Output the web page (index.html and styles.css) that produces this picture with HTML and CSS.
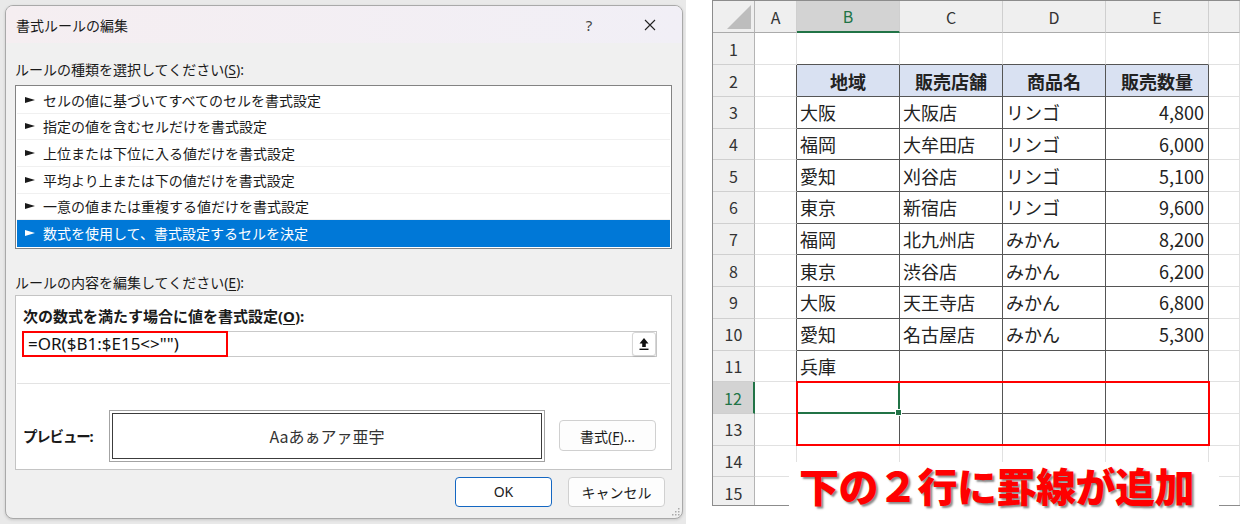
FILE: index.html
```html
<!DOCTYPE html>
<html lang="ja">
<head>
  <meta charset="UTF-8">
  <title>書式ルールの編集</title>
  <link rel="stylesheet" href="styles.css">
</head>
<body>
  <div class="desk">
    <div class="dialog">
      <div class="titlebar">
        <span class="title">書式ルールの編集</span>
        <span class="help">?</span>
        <span class="close">
          <svg width="12" height="12" viewBox="0 0 12 12"><path d="M1 1L11 11M11 1L1 11" stroke="#222" stroke-width="1.1" fill="none"/></svg>
        </span>
      </div>

      <div class="dlg-body">
        <div class="label">ルールの種類を選択してください(<u>S</u>):</div>
        <ul class="rule-list">
          <li><i class="tri"></i>セルの値に基づいてすべてのセルを書式設定</li>
          <li><i class="tri"></i>指定の値を含むセルだけを書式設定</li>
          <li><i class="tri"></i>上位または下位に入る値だけを書式設定</li>
          <li><i class="tri"></i>平均より上または下の値だけを書式設定</li>
          <li><i class="tri"></i>一意の値または重複する値だけを書式設定</li>
          <li class="selected"><i class="tri"></i>数式を使用して、書式設定するセルを決定</li>
        </ul>

        <div class="label second">ルールの内容を編集してください(<u>E</u>):</div>
        <div class="edit-box">
          <div class="bold-label">次の数式を満たす場合に値を書式設定(<u>O</u>):</div>
          <div class="formula">
            <span class="formula-text">=OR($B1:$E15&lt;&gt;"")</span>
            <span class="mark"></span>
            <span class="collapse">
              <svg width="12" height="14" viewBox="0 0 12 14"><path d="M6 1L1.5 6.5H4.2V10H7.8V6.5H10.5Z" fill="#111"/><rect x="1.5" y="11.6" width="9" height="1.4" fill="#111"/></svg>
            </span>
          </div>
          <div class="sep"></div>
          <div class="preview-row">
            <span class="bold-label preview-label">プレビュー:</span>
            <div class="preview">Aaあぁアァ亜宇</div>
            <button class="btn fmt">書式(<u>F</u>)...</button>
          </div>
        </div>

        <div class="actions">
          <button class="btn ok">OK</button>
          <button class="btn">キャンセル</button>
        </div>
      </div>
      <svg class="grip" width="9" height="9" viewBox="0 0 9 9">
        <rect x="7" y="1" width="1.5" height="1.5" fill="#aaa"/>
        <rect x="4" y="4" width="1.5" height="1.5" fill="#aaa"/>
        <rect x="7" y="4" width="1.5" height="1.5" fill="#aaa"/>
        <rect x="1" y="7" width="1.5" height="1.5" fill="#aaa"/>
        <rect x="4" y="7" width="1.5" height="1.5" fill="#aaa"/>
        <rect x="7" y="7" width="1.5" height="1.5" fill="#aaa"/>
      </svg>
    </div>
  </div>

  <div class="sheet-pane">
    <div class="sheet">
      <div class="row head">
        <div class="rh corner"><i></i></div>
        <div class="ch">A</div><div class="ch on">B</div><div class="ch">C</div><div class="ch">D</div><div class="ch">E</div><div class="ch"></div>
      </div>
      <div class="row r32">
        <div class="rh">1</div><div></div><div class="tt"></div><div class="tt"></div><div class="tt"></div><div class="tt"></div><div></div>
      </div>
      <div class="row r32">
        <div class="rh">2</div><div class="tl"></div>
        <div class="t th">地域</div><div class="t th">販売店舗</div><div class="t th">商品名</div><div class="t th">販売数量</div><div></div>
      </div>
      <div class="row">
        <div class="rh">3</div><div class="tl"></div>
        <div class="t">大阪</div><div class="t">大阪店</div><div class="t">リンゴ</div><div class="t num">4,800</div><div></div>
      </div>
      <div class="row">
        <div class="rh">4</div><div class="tl"></div>
        <div class="t">福岡</div><div class="t">大牟田店</div><div class="t">リンゴ</div><div class="t num">6,000</div><div></div>
      </div>
      <div class="row">
        <div class="rh">5</div><div class="tl"></div>
        <div class="t">愛知</div><div class="t">刈谷店</div><div class="t">リンゴ</div><div class="t num">5,100</div><div></div>
      </div>
      <div class="row">
        <div class="rh">6</div><div class="tl"></div>
        <div class="t">東京</div><div class="t">新宿店</div><div class="t">リンゴ</div><div class="t num">9,600</div><div></div>
      </div>
      <div class="row">
        <div class="rh">7</div><div class="tl"></div>
        <div class="t">福岡</div><div class="t">北九州店</div><div class="t">みかん</div><div class="t num">8,200</div><div></div>
      </div>
      <div class="row">
        <div class="rh">8</div><div class="tl"></div>
        <div class="t">東京</div><div class="t">渋谷店</div><div class="t">みかん</div><div class="t num">6,200</div><div></div>
      </div>
      <div class="row">
        <div class="rh">9</div><div class="tl"></div>
        <div class="t">大阪</div><div class="t">天王寺店</div><div class="t">みかん</div><div class="t num">6,800</div><div></div>
      </div>
      <div class="row">
        <div class="rh">10</div><div class="tl"></div>
        <div class="t">愛知</div><div class="t">名古屋店</div><div class="t">みかん</div><div class="t num">5,300</div><div></div>
      </div>
      <div class="row">
        <div class="rh">11</div><div class="tl"></div>
        <div class="t">兵庫</div><div class="t"></div><div class="t"></div><div class="t"></div><div></div>
      </div>
      <div class="row">
        <div class="rh on">12</div><div class="tl"></div>
        <div class="t sel"></div><div class="t"></div><div class="t"></div><div class="t"></div><div></div>
      </div>
      <div class="row">
        <div class="rh">13</div><div class="tl"></div>
        <div class="t"></div><div class="t"></div><div class="t"></div><div class="t"></div><div></div>
      </div>
      <div class="row">
        <div class="rh">14</div><div></div><div></div><div></div><div></div><div></div><div></div>
      </div>
      <div class="row">
        <div class="rh">15</div><div></div><div></div><div></div><div></div><div></div><div></div>
      </div>
    </div>
    <div class="mark-rows"></div>
    <div class="caption">下の２行に罫線が追加</div>
  </div>
</body>
</html>
```

FILE: styles.css
```css
body {
  margin: 0;
  height: 524px;
  display: flex;
  background: #fff;
  font-family: "Noto Sans", "Noto Sans CJK JP", sans-serif;
  color: #1a1a1a;
  overflow: hidden;
}

u {
  text-underline-offset: 2px;
}

/* ---- dialog side ---- */

.desk {
  flex: none;
  width: 686px;
  padding: 5px 3px 5px 5px;
  box-sizing: border-box;
  background: #e9e9e9;
}

.dialog {
  position: relative;
  width: 678px;
  height: 514px;
  box-sizing: border-box;
  border: 1px solid #a9a9a9;
  border-radius: 8px;
  background: #f0f0f0;
  box-shadow: 0 1px 3px rgba(0,0,0,0.15);
  overflow: hidden;
}

.titlebar {
  height: 37px;
  display: flex;
  align-items: center;
  padding-left: 10px;
  background: linear-gradient(90deg, #f5eef1, #f1eff6);
  font-size: 14px;
}

.help {
  margin-left: auto;
  width: 20px;
  text-align: center;
  font-size: 15px;
  color: #444;
}

.close {
  width: 46px;
  margin-left: 28px;
  margin-right: 9px;
  display: flex;
  justify-content: center;
}

.dlg-body {
  padding: 0 10px 0 9px;
}

.label {
  margin-top: 17px;
  height: 20px;
  line-height: 20px;
  font-size: 14px;
}

.label.second {
  margin-top: 24px;
}

.rule-list {
  list-style: none;
  margin: 5px 0 0;
  padding: 1px;
  border: 1px solid #838383;
  background: #fff;
  font-size: 14px;
}

.rule-list li {
  height: 26.67px;
  box-sizing: border-box;
  display: flex;
  align-items: center;
  padding-left: 8px;
  border-bottom: 1px solid #f0f0f0;
}

.rule-list li.selected {
  background: #0078d7;
  color: #fff;
  border-bottom-color: #0078d7;
}

.tri {
  width: 0;
  height: 0;
  border-left: 10px solid #1a1a1a;
  border-top: 3.5px solid transparent;
  border-bottom: 3.5px solid transparent;
  margin-right: 8px;
}

.selected .tri {
  border-left-color: #fff;
}

.edit-box {
  margin-top: 2px;
  height: 175px;
  box-sizing: border-box;
  border: 1px solid #c4c4c4;
  background: #fff;
  padding-top: 10px;
}

.bold-label {
  display: block;
  height: 20px;
  line-height: 20px;
  padding-left: 7px;
  font-size: 15px;
  font-weight: bold;
}

.formula {
  position: relative;
  height: 26px;
  margin: 5px 14px 0 6px;
  box-sizing: border-box;
  border: 1px solid #c9c9c9;
  display: flex;
  align-items: center;
  padding-left: 5px;
}

.formula-text {
  font-size: 17px;
  color: #111;
}

.mark {
  position: absolute;
  left: -1px;
  top: -1px;
  bottom: -1px;
  width: 206px;
  border: 2px solid #f00;
  box-sizing: border-box;
}

.collapse {
  margin-left: auto;
  width: 24px;
  height: 24px;
  box-sizing: border-box;
  border: 1px solid #d6d6d6;
  border-radius: 3px;
  background: #fff;
  box-shadow: 0 1px 1px rgba(0,0,0,0.12);
  display: flex;
  align-items: center;
  justify-content: center;
}

.sep {
  margin: 26px 1px 0;
  height: 1px;
  background: #e3e3e3;
}

.preview-row {
  margin-top: 26px;
  display: flex;
  align-items: center;
}

.preview-label {
  flex: none;
  width: 93px;
  box-sizing: border-box;
  white-space: nowrap;
  font-size: 14.5px;
  letter-spacing: -1.2px;
}

.preview {
  flex: none;
  width: 436px;
  height: 52px;
  box-sizing: border-box;
  border: 1px solid #a3a3a3;
  box-shadow: inset 0 0 0 2px #fff, inset 0 0 0 3px #3c3c3c;
  display: flex;
  align-items: center;
  justify-content: center;
  font-family: "Noto Sans CJK JP", sans-serif;
  font-size: 16px;
  color: #333;
}

.btn {
  width: 97px;
  height: 30px;
  box-sizing: border-box;
  border: 1px solid #d0d0d0;
  border-radius: 4px;
  background: #fdfdfd;
  font-family: "Noto Sans", "Noto Sans CJK JP", sans-serif;
  font-size: 14px;
  color: #1a1a1a;
  padding: 0;
}

.btn.fmt {
  flex: none;
  height: 31px;
  margin-left: 14px;
}

.btn.ok {
  border-color: #1467c2;
  background: #fff;
}

.actions {
  margin-top: 7px;
  margin-right: 7px;
  display: flex;
  justify-content: flex-end;
  gap: 16px;
}

.grip {
  position: absolute;
  right: 2px;
  bottom: 2px;
}

/* ---- sheet side ---- */

.sheet-pane {
  position: relative;
  flex: none;
  width: 528px;
  margin-left: 26px;
}

.sheet {
  height: 506px;
  box-sizing: border-box;
  border: 1px solid #8c8c8c;
  border-right: none;
  overflow: hidden;
  font-family: "Noto Sans CJK JP", sans-serif;
}

.row {
  display: grid;
  grid-template-columns: 42px 42px 103px 103px 103px 103px 1fr;
  height: 31.7px;
}

.row.head,
.row.r32 {
  height: 32px;
}

.row > div {
  box-sizing: border-box;
  border-right: 1px solid #e1e1e1;
  border-bottom: 1px solid #e1e1e1;
  display: flex;
  align-items: center;
  padding: 0 3px;
  font-size: 18px;
  color: #222;
  white-space: nowrap;
  overflow: hidden;
}

.row > .rh,
.row > .ch {
  background: #efefef;
  border-right-color: #cfcfcf;
  border-bottom-color: #cfcfcf;
  justify-content: center;
  font-size: 16px;
  color: #333;
}

.row > .rh {
  border-right-color: #b4b4b4;
}

.row.head > div {
  border-bottom-color: #ababab;
}

.row > .on {
  background: #d3d3d3;
  color: #217346;
}

.row.head > .on {
  border-bottom: 2px solid #217346;
}

.row > .rh.on {
  border-right: 2px solid #217346;
}

.row > .corner {
  justify-content: flex-end;
  align-items: flex-end;
  padding: 3px;
}

.corner i {
  width: 0;
  height: 0;
  border-left: 24px solid transparent;
  border-bottom: 24px solid #bdbdbd;
}

.row > .t {
  border-right-color: #555;
  border-bottom-color: #555;
}

.row > .tl {
  border-right-color: #555;
}

.row > .tt {
  border-bottom-color: #555;
}

.row > .th {
  background: #d9e1f2;
  font-weight: bold;
  justify-content: center;
}

.row > .num {
  justify-content: flex-end;
  padding-right: 4px;
}

.row > .sel {
  position: relative;
  overflow: visible;
  border-right: 2px solid #217346;
  border-bottom: 2px solid #217346;
}

.sel::after {
  content: "";
  position: absolute;
  right: -4px;
  bottom: -4px;
  width: 5px;
  height: 5px;
  background: #217346;
  border: 1px solid #fff;
}

.mark-rows {
  position: absolute;
  left: 84px;
  top: 381px;
  width: 414px;
  height: 65px;
  box-sizing: border-box;
  border: 2px solid #f00;
}

.caption {
  position: absolute;
  left: 77px;
  top: 462px;
  width: 430px;
  height: 62px;
  box-sizing: border-box;
  padding-left: 10px;
  background: #fff;
  font-family: "Noto Sans CJK JP", sans-serif;
  font-size: 40px;
  font-weight: 900;
  line-height: 46px;
  letter-spacing: -0.5px;
  color: #f00;
  text-shadow: 2px 2px 2px #8a8a8a;
  white-space: nowrap;
}
```
